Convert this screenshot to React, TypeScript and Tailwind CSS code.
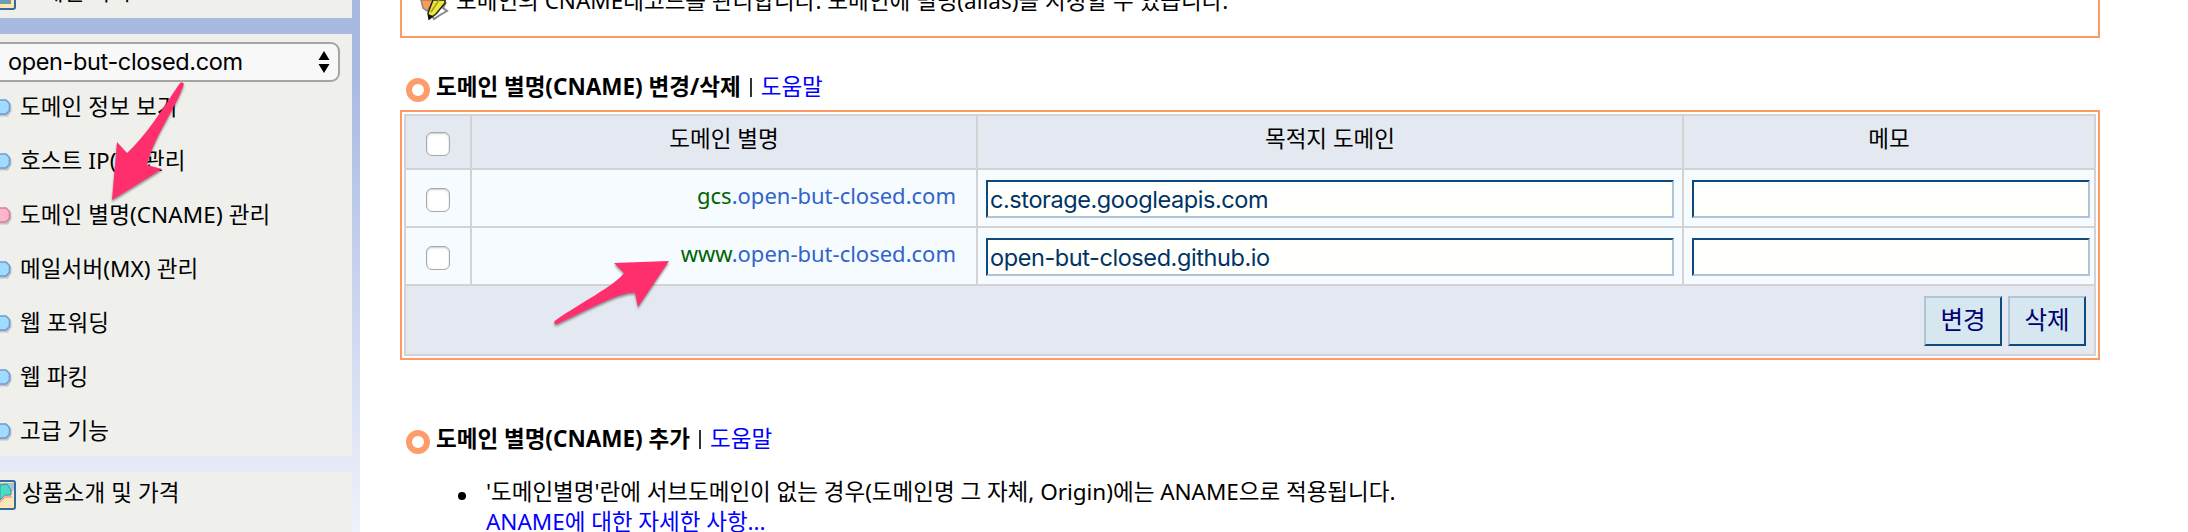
import type { ReactNode } from "react";

const kr = "font-['Noto_Sans','Noto_Sans_CJK_KR',sans-serif]";
const menu = ["도메인 정보 보기", "호스트 IP(A) 관리", "도메인 별명(CNAME) 관리", "메일서버(MX) 관리", "웹 포워딩", "웹 파킹", "고급 기능"];
const rows = [
  { host: "gcs", target: "c.storage.googleapis.com" },
  { host: "www", target: "open-but-closed.github.io" },
];
const line = "border-[#d3d3d3]";

function Bullet({ pink }: { pink: boolean }) {
  return (
    <svg width="12" height="18" viewBox="0 0 12 18" className="mt-px shrink-0">
      <path d="M0 3H8L11.500 6v6L8 17.500H0Z" fill="#c3c3c8" />
      <path d="M-2 1H6L9.500 4.500V11.500L6 15H-2Z" fill={pink ? "#ffb6c8" : "#9fdcff"} stroke={pink ? "#d080a0" : "#6c9bd0"} strokeWidth="1.600" />
    </svg>
  );
}

function Box() {
  return <span className="block h-6 w-6 rounded-[6px] border border-[#a8a8a8] bg-white shadow-[inset_0_1px_2px_#ccc]" />;
}

function Heading({ title }: { title: string }) {
  return (
    <div className="flex h-[34px] items-center whitespace-nowrap">
      <span className="mt-[6px] ml-[6px] h-6 w-6 shrink-0 rounded-full border-[6.5px] border-[#ff9c6b]" />
      <h2 className="ml-[6px] pt-px font-bold">{title}</h2>
      <span className="ml-[9px] h-[19px] w-[2px] bg-[#333]" />
      <a className="ml-[9px] pt-px text-[#0000ff]">도움말</a>
    </div>
  );
}

function Field({ value }: { value: string }) {
  return (
    <div className="flex h-[38px] w-full items-center border-2 border-t-[#0f4a7d] border-l-[#0f4a7d] border-r-[#b0c4d8] border-b-[#b0c4d8] bg-[#fffffc] pt-px pl-[2px] font-[Inter,sans-serif] text-[23.5px] tracking-[-0.42px] text-[#003366]">
      {value}
    </div>
  );
}

function Button({ children }: { children: ReactNode }) {
  return (
    <button className="h-[50px] w-[78px] border-2 border-t-[#b0c4d8] border-l-[#b0c4d8] border-r-[#0f4a7d] border-b-[#0f4a7d] bg-[#d6e7f0] pb-px text-[24.5px] text-[#000070]">
      {children}
    </button>
  );
}

export default function App() {
  return (
    <div className={`relative flex h-[532px] w-[2188px] overflow-hidden bg-white text-[22.5px] leading-none text-black ${kr}`}>
      <aside className="flex h-full w-[360px] shrink-0 flex-col gap-4 bg-linear-to-b from-[#a9bae2] from-15% to-[#eff2fb] pr-2">
        <div className="h-[18px] shrink-0 overflow-hidden bg-[#eff0eb]">
          <div className="-mt-[20px] flex items-center whitespace-nowrap">
            <svg width="16" height="30" viewBox="0 0 16 30" className="shrink-0">
              <rect x="-10" y="2" width="25" height="27" rx="2" fill="#ffe6b0" stroke="#356a9c" strokeWidth="2" />
              <rect x="-4" y="10" width="15" height="14" fill="#6f9cb5" />
            </svg>
            <span className="-mt-[5px] ml-[6px]">도메인 목록</span>
          </div>
        </div>
        <div className="h-[422px] shrink-0 bg-[#eff0eb] pt-2">
          <div className="flex h-10 w-[340px] items-center justify-between rounded-r-[9px] border-2 border-l-0 border-[#a5a5a5] bg-[#f8f8f8] pr-2 pl-[8px] font-[Inter,sans-serif] text-[23.5px] tracking-[-0.37px]">
            <span>open-but-closed.com</span>
            <svg width="12" height="22" viewBox="0 0 12 22"><path d="M6 0L11.500 9H.5ZM6 22L.5 13H11.500Z" /></svg>
          </div>
          <div className="-mt-[2px]">
            {menu.map((m, i) => (
              <div key={m} className="flex h-[54px] items-center whitespace-nowrap">
                <Bullet pink={i === 2} />
                <span className="ml-[8px] tracking-[0.1px]">{m}</span>
              </div>
            ))}
          </div>
        </div>
        <div className="flex h-[60px] shrink-0 items-start bg-[#eff0eb] pt-2">
          <svg width="16" height="30" viewBox="0 0 16 30" className="shrink-0">
            <rect x="-10" y="1" width="25" height="28" rx="2" fill="#ffe6b8" stroke="#356a9c" strokeWidth="2" />
            <path d="M0 12L8 17L14 9V3H0Z" fill="#a9c4d8" />
            <path d="M0 5L7 4L11 10V15L5 15L0 20Z" fill="#48dcc4" stroke="#4a8ca4" />
            <path d="M0 22L5 17L12 17" fill="none" stroke="#f09a98" strokeWidth="1.500" />
          </svg>
          <span className="mt-[2px] ml-[6px] tracking-[0.1px]">상품소개 및 가격</span>
        </div>
      </aside>
      <main className="ml-[40px] w-[1700px]">
        <div className="flex h-[38px] items-start overflow-hidden border-2 border-t-0 border-[#ff9966] pl-[16px]">
          <svg width="32" height="22" viewBox="0 0 32 22" className="shrink-0">
            <path d="M3 0L5 8L9 11L15 2V0Z" fill="#ff9a50" stroke="#888" strokeWidth="1.500" />
            <path d="M13 14L16 19L22 15L29 11L25 8L28 2" fill="none" stroke="#888" strokeWidth="2" />
            <path d="M15 0L10 13L11 19L18 14L27 3V0Z" fill="#ece83a" stroke="#222" strokeWidth="1.500" />
            <path d="M10 14L11 20L15 16Z" fill="#111" />
            <path d="M13 12L21 0" stroke="#a49a20" strokeWidth="1.500" />
          </svg>
          <p className="-mt-[10px] ml-[6px] whitespace-nowrap">도메인의 CNAME레코드를 관리합니다. 도메인에 별명(alias)을 지정할 수 있습니다.</p>
        </div>
        <div className="pt-[32px]"><Heading title="도메인 별명(CNAME) 변경/삭제" /></div>
        <section className="mt-[6px] h-[250px] border-2 border-[#ff9966] p-[2px]">
          <table className={`h-[242px] w-full table-fixed border-collapse border-2 ${line}`}>
            <colgroup><col className="w-[66px]" /><col className="w-[506px]" /><col className="w-[706px]" /><col /></colgroup>
            <tbody>
              <tr className="h-[54px] bg-[#e4e9f1]">
                <th className={`border-2 pt-[4px] pl-5 ${line}`}><Box /></th>
                {["도메인 별명", "목적지 도메인", "메모"].map((t) => <th key={t} className={`border-2 pb-[5px] font-normal ${line}`}>{t}</th>)}
              </tr>
              {rows.map((r) => (
                <tr key={r.host} className="h-[58px] bg-[#f5fbff]">
                  <td className={`border-2 pt-[4px] pl-5 ${line}`}><Box /></td>
                  <td className={`border-2 pr-5 pb-[6px] text-right text-[22px] ${line}`}><span className="text-[#006400]">{r.host}</span><span className="text-[#3264c8]">.open-but-closed.com</span></td>
                  <td className={`border-2 px-[8px] pt-[2px] ${line}`}><Field value={r.target} /></td>
                  <td className={`border-2 pt-[2px] pr-[4px] pl-[8px] ${line}`}><Field value="" /></td>
                </tr>
              ))}
              <tr className="bg-[#e4e9f1]">
                <td colSpan={4} className={`border-2 pt-[2px] pr-2 ${line}`}><div className="flex justify-end gap-[6px]"><Button>변경</Button><Button>삭제</Button></div></td>
              </tr>
            </tbody>
          </table>
        </section>
        <div className="pt-[62px]"><Heading title="도메인 별명(CNAME) 추가" /></div>
        <div className="mt-[21px] flex whitespace-nowrap leading-[30px]">
          <span className="mt-[15px] ml-[58px] h-2 w-2 rounded-full bg-black" />
          <p className="ml-[20px] tracking-[-0.02px]">'도메인별명'란에 서브도메인이 없는 경우(도메인명 그 자체, Origin)에는 ANAME으로 적용됩니다.<br /><a className="text-[#0000ff]">ANAME에 대한 자세한 사항...</a></p>
        </div>
      </main>
      <svg className="pointer-events-none absolute top-0 left-0" width="2188" height="532" viewBox="0 0 2188 532">
        <g fill="#ff2f6e" className="drop-shadow-[0_2px_1px_rgba(0,0,0,0.4)]">
          <path d="M180 83Q182 81 184 84C176 108 154 136 147 165L162 169L112 200L117 142L127 153C145 137 162 110 180 83Z" />
          <path d="M555 324Q553 322 556 320C580 303 616 285 624 273L614 263L669 261L638 307L635 293C622 291 590 309 557 324Z" />
        </g>
      </svg>
    </div>
  );
}
